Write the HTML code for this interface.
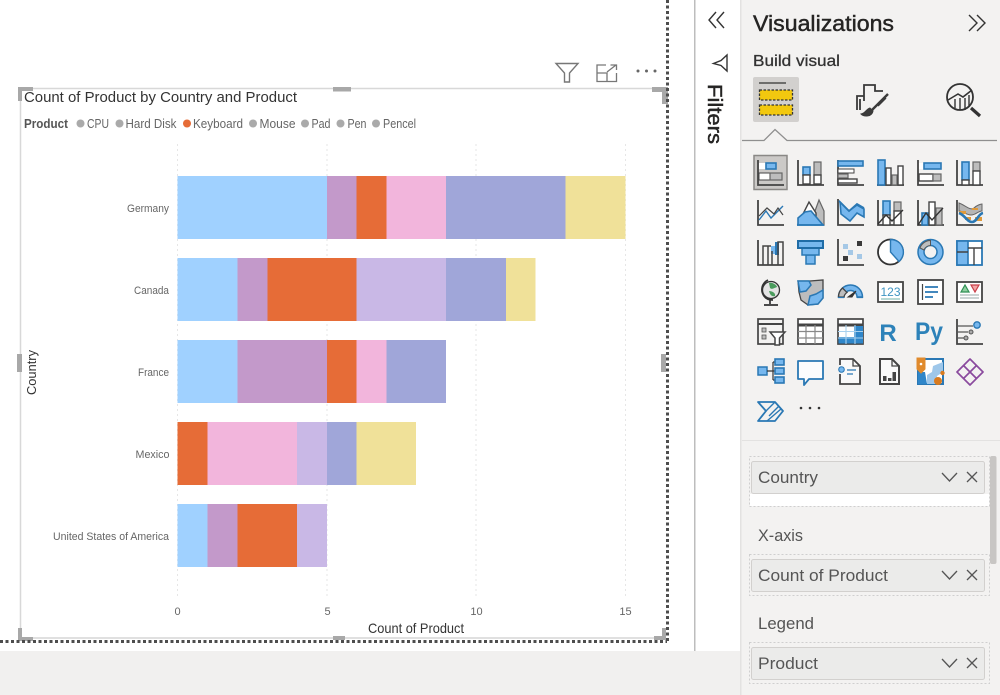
<!DOCTYPE html>
<html><head><meta charset="utf-8"><style>
html,body{margin:0;padding:0;width:1000px;height:695px;overflow:hidden;background:#fff}
svg{display:block;font-family:"Liberation Sans",sans-serif}
.d{fill:none;stroke:#444;stroke-width:1.8}
.b{fill:#76b7ee;stroke:#2a78b4;stroke-width:1.6}
.bl{fill:none;stroke:#2a78b4;stroke-width:1.8}
.g{fill:#bdbdbd;stroke:#666;stroke-width:1.2}
.w{fill:#fff;stroke:#444;stroke-width:1.4}
</style></head><body>
<svg width="1000" height="695" viewBox="0 0 1000 695" xmlns="http://www.w3.org/2000/svg">
<rect width="1000" height="695" fill="#fff"/>
<rect x="0" y="651" width="741" height="44" fill="#f1f0ef"/>
<rect x="694" y="0" width="1.500" height="651" fill="#bdbdbd"/>
<rect x="741" y="0" width="259" height="695" fill="#f3f2f1"/>
<rect x="740" y="0" width="1.500" height="695" fill="#e3e2e1"/>

<!-- gridlines -->
<g stroke="#e6e6e6" stroke-dasharray="2 3" stroke-width="1">
<path d="M177.500 144V597M327 144V597M476 144V597M625.500 144V597"/>
</g>
<!-- visual border -->
<path d="M20.500 630V88.500H665" fill="none" stroke="#d8d8d8" stroke-width="1.500"/>
<rect x="20" y="637" width="645" height="2" fill="#e0e0e0"/>
<!-- bars -->
<g>
<rect x="177.500" y="176" width="149.500" height="63" fill="#a0d1ff"/><rect x="327" y="176" width="29.500" height="63" fill="#c399ca"/><rect x="356.500" y="176" width="30" height="63" fill="#e66c37"/><rect x="386.500" y="176" width="59.500" height="63" fill="#f2b5dc"/><rect x="446" y="176" width="119.500" height="63" fill="#a0a6d9"/><rect x="565.500" y="176" width="60" height="63" fill="#f0e199"/>
<rect x="177.500" y="258" width="60" height="63" fill="#a0d1ff"/><rect x="237.500" y="258" width="30" height="63" fill="#c399ca"/><rect x="267.500" y="258" width="89" height="63" fill="#e66c37"/><rect x="356.500" y="258" width="89.500" height="63" fill="#c9b8e6"/><rect x="446" y="258" width="60" height="63" fill="#a0a6d9"/><rect x="506" y="258" width="29.500" height="63" fill="#f0e199"/>
<rect x="177.500" y="340" width="60" height="63" fill="#a0d1ff"/><rect x="237.500" y="340" width="89.500" height="63" fill="#c399ca"/><rect x="327" y="340" width="29.500" height="63" fill="#e66c37"/><rect x="356.500" y="340" width="30" height="63" fill="#f2b5dc"/><rect x="386.500" y="340" width="59.500" height="63" fill="#a0a6d9"/>
<rect x="177.500" y="422" width="30" height="63" fill="#e66c37"/><rect x="207.500" y="422" width="89.500" height="63" fill="#f2b5dc"/><rect x="297" y="422" width="30" height="63" fill="#c9b8e6"/><rect x="327" y="422" width="29.500" height="63" fill="#a0a6d9"/><rect x="356.500" y="422" width="59.500" height="63" fill="#f0e199"/>
<rect x="177.500" y="504" width="30" height="63" fill="#a0d1ff"/><rect x="207.500" y="504" width="30" height="63" fill="#c399ca"/><rect x="237.500" y="504" width="59.500" height="63" fill="#e66c37"/><rect x="297" y="504" width="30" height="63" fill="#c9b8e6"/>
</g>
<!-- chart text -->
<text x="24" y="102" font-size="15" fill="#333" textLength="273" lengthAdjust="spacingAndGlyphs">Count of Product by Country and Product</text>
<g font-size="13" fill="#666">
<text x="24" y="128" font-weight="bold" fill="#555" textLength="44" lengthAdjust="spacingAndGlyphs">Product</text>
<circle cx="80.500" cy="123.500" r="4" fill="#aaa"/><text x="87" y="128" textLength="22" lengthAdjust="spacingAndGlyphs">CPU</text>
<circle cx="119.500" cy="123.500" r="4" fill="#aaa"/><text x="125.500" y="128" textLength="51" lengthAdjust="spacingAndGlyphs">Hard Disk</text>
<circle cx="187" cy="123.500" r="4" fill="#e66c37"/><text x="193" y="128" textLength="50" lengthAdjust="spacingAndGlyphs">Keyboard</text>
<circle cx="253" cy="123.500" r="4" fill="#aaa"/><text x="259.500" y="128" textLength="36" lengthAdjust="spacingAndGlyphs">Mouse</text>
<circle cx="305" cy="123.500" r="4" fill="#aaa"/><text x="311.500" y="128" textLength="19" lengthAdjust="spacingAndGlyphs">Pad</text>
<circle cx="340.500" cy="123.500" r="4" fill="#aaa"/><text x="347.500" y="128" textLength="19" lengthAdjust="spacingAndGlyphs">Pen</text>
<circle cx="376" cy="123.500" r="4" fill="#aaa"/><text x="383" y="128" textLength="33" lengthAdjust="spacingAndGlyphs">Pencel</text>
</g>
<g font-size="11" fill="#666">
<text x="127" y="212" textLength="42" lengthAdjust="spacingAndGlyphs">Germany</text>
<text x="134" y="294" textLength="35" lengthAdjust="spacingAndGlyphs">Canada</text>
<text x="138" y="376" textLength="31" lengthAdjust="spacingAndGlyphs">France</text>
<text x="135.500" y="458" textLength="34" lengthAdjust="spacingAndGlyphs">Mexico</text>
<text x="53" y="540" textLength="116" lengthAdjust="spacingAndGlyphs">United States of America</text>
<text x="177.500" y="615" text-anchor="middle">0</text>
<text x="327.500" y="615" text-anchor="middle">5</text>
<text x="476.500" y="615" text-anchor="middle">10</text>
<text x="625.500" y="615" text-anchor="middle">15</text>
</g>
<text x="368" y="633" font-size="14" fill="#333" textLength="96" lengthAdjust="spacingAndGlyphs">Count of Product</text>
<text transform="translate(36 395) rotate(-90)" font-size="13" fill="#333" textLength="45" lengthAdjust="spacingAndGlyphs">Country</text>

<!-- handles -->
<g fill="#a8a8a8">
<path d="M18 87H33V91H22V101H18Z"/>
<path d="M333 87H351V91.500H333Z"/>
<path d="M652 87H668V104H662V92H652Z"/>
<path d="M17 354H22V372H17Z"/>
<path d="M661 354H666V372H661Z"/>
<path d="M18 628H22V637H33V641H18Z"/>
<path d="M333 636H345V640H333Z"/>
<path d="M654 636H662V628H666V640H654Z"/>
</g>
<!-- selection dots -->
<path d="M667.500 0V641M0 641.500H667" fill="none" stroke="#4d4d4d" stroke-width="3" stroke-dasharray="3 2.500"/>
<!-- header icons -->
<path d="M556 63.500H578L569.500 73V82H564.500V73Z" fill="none" stroke="#777" stroke-width="1.400"/>
<path d="M606 65H597V81.500H616.500V73M597 73H607V81.500M607 72L616 65M610.500 65H616.500V70" fill="none" stroke="#777" stroke-width="1.300"/>
<g fill="#666"><circle cx="638" cy="71" r="1.500"/><circle cx="646.500" cy="71" r="1.500"/><circle cx="655" cy="71" r="1.500"/></g>

<!-- filters pane -->
<path d="M716 12L709 20L716 28M724 12L717 20L724 28" fill="none" stroke="#333" stroke-width="1.400"/>
<path d="M727 55V71L721 65.500L713.500 63.500L721 60.500Z" fill="none" stroke="#333" stroke-width="1.400"/>
<text transform="translate(708 84) rotate(90)" font-size="20" fill="#252423" stroke="#252423" stroke-width=".45" textLength="60" lengthAdjust="spacingAndGlyphs">Filters</text>

<!-- viz header -->
<text x="753" y="31" font-size="22" fill="#252423" stroke="#252423" stroke-width=".45" textLength="141" lengthAdjust="spacingAndGlyphs">Visualizations</text>
<path d="M969 15L977 23L969 31M977 15L985 23L977 31" fill="none" stroke="#333" stroke-width="1.400"/>
<text x="753" y="66" font-size="16" fill="#333" stroke="#333" stroke-width=".3" textLength="87" lengthAdjust="spacingAndGlyphs">Build visual</text>
<rect x="753" y="77" width="46" height="45" rx="2" fill="#d2d0ce"/>
<path d="M759 83H786" stroke="#333" stroke-width="1.300"/>
<rect x="759.500" y="90" width="33" height="10" fill="#f2c80f" stroke="#333" stroke-width="1.300" stroke-dasharray="2.500 1.500"/>
<rect x="759.500" y="105" width="33" height="10" fill="#f2c80f" stroke="#333" stroke-width="1.300" stroke-dasharray="2.500 1.500"/>
<g fill="none" stroke="#3a3a3a" stroke-width="1.800">
<path d="M857 110V96H864M860 110V99M864 101V85H875V91H883"/>
<path d="M888 94L872 110" stroke-width="2.400"/>
<path d="M886 98L878 106" stroke-width="1.400"/>
<path d="M870 108C866 109 866 113 861 114C864 117 872 117 873 111Z" fill="#3a3a3a" stroke-width="1"/>
</g>
<g fill="none" stroke="#333" stroke-width="1.800">
<circle cx="960" cy="97" r="13"/>
<path d="M971 108L980 116" stroke-width="3.200"/>
<path d="M948 100L958 94L963 97L972 90" stroke-width="1.600"/>
<path d="M955 99V108M960 98V110M965 98V110M969 95V106" stroke-width="1.400"/>
</g>
<path d="M742 140.500H764L775 129.500L787 140.500H997" fill="none" stroke="#8f8f8f" stroke-width="1.300"/>

<!-- row 1 -->
<rect x="754" y="155.500" width="33" height="34" fill="#cbc9c7" stroke="#8a8886" stroke-width="1.500"/>
<g transform="translate(757 159)">
<path class="d" d="M1 1V26H27"/><rect x="2" y="4" width="7" height="6" fill="#fff"/><rect x="9" y="4" width="10" height="6" class="b"/><rect x="2" y="14" width="11" height="7" fill="#fff" stroke="#444"/><rect x="13" y="14" width="12" height="7" class="g"/>
</g>
<g transform="translate(797 159)">
<path class="d" d="M1 1V26H27"/><rect x="6" y="8" width="7" height="8" class="b"/><rect x="6" y="16" width="7" height="9" class="w"/><rect x="17" y="3" width="7" height="13" class="g"/><rect x="17" y="16" width="7" height="9" class="w"/>
</g>
<g transform="translate(837 159)">
<path class="d" d="M1 1V26H27"/><rect x="1" y="2" width="25" height="5" class="b"/><rect x="1" y="10" width="16" height="4" fill="#fff" stroke="#444"/><rect x="1" y="15" width="10" height="4" class="g"/><rect x="1" y="20" width="19" height="4" class="w"/>
</g>
<g transform="translate(877 159)">
<path class="d" d="M0 26H27"/><rect x="1" y="1" width="7" height="25" class="b"/><rect x="9" y="9" width="5" height="17" class="w"/><rect x="15" y="16" width="5" height="10" class="g"/><rect x="21" y="7" width="5" height="19" class="w"/>
</g>
<g transform="translate(917 159)">
<path class="d" d="M1 1V26H27"/><rect x="2" y="4" width="7" height="6" fill="#fff"/><rect x="7" y="4" width="17" height="6" class="b"/><rect x="2" y="15" width="14" height="7" class="w"/><rect x="16" y="15" width="8" height="7" class="g"/>
</g>
<g transform="translate(956 159)">
<path class="d" d="M1 1V26H27"/><rect x="6" y="3" width="7" height="18" class="b"/><rect x="6" y="21" width="7" height="5" class="w"/><rect x="17" y="3" width="7" height="9" class="g"/><rect x="17" y="12" width="7" height="14" class="w"/>
</g>

<!-- row 2 -->
<g transform="translate(757 199)">
<path class="d" d="M1 1V26H27"/><path d="M2 21L9 12L14 19L26 7" fill="none" stroke="#2a78b4" stroke-width="1.400"/><path d="M2 17L10 9L17 15L21 9L26 16" fill="none" stroke="#444" stroke-width="1.200"/>
</g>
<g transform="translate(797 199)">
<path class="g" d="M18 12L22 1L27 12V26H18Z"/><path d="M1 25L12 3L19 14V25Z" fill="#fff" stroke="#444" stroke-width="1.400"/><path class="b" d="M1 19L8 13L14 12L26 26H1Z" stroke-width="1"/><path d="M0 26H27" stroke="#2a78b4" stroke-width="1.800"/>
</g>
<g transform="translate(837 199)">
<path class="b" d="M3 3L12 12L20 6L27 10V18L20 14L13 22L4 15Z" stroke="none"/><path class="d" d="M1 0V26H27"/><path class="bl" d="M2 2L12 12L20 5L27 9"/>
</g>
<g transform="translate(877 199)">
<path class="d" d="M1 1V26H27"/><rect x="6" y="2" width="7" height="14" class="b"/><rect x="6" y="16" width="7" height="10" class="w"/><rect x="17" y="3" width="7" height="9" class="g"/><rect x="17" y="12" width="7" height="14" class="w"/><path d="M1 25L9 16L15 22L26 11" fill="none" stroke="#333" stroke-width="1.400"/>
</g>
<g transform="translate(917 199)">
<path class="d" d="M1 1V26H27"/><rect x="5" y="14" width="6" height="12" class="b"/><rect x="12" y="3" width="6" height="23" class="w"/><rect x="19" y="9" width="6" height="17" class="g"/><path d="M1 26L9 14L15 21L26 9" fill="none" stroke="#333" stroke-width="1.400"/>
</g>
<g transform="translate(956 199)">
<path class="d" d="M1 1V26H27"/><path d="M3 4C9 6 14 12 18 9C21 6 25 5 26 5V12C22 12 20 16 15 16C10 16 7 12 3 12Z" fill="#b5b5b5" stroke="#666"/><rect x="9" y="18" width="6" height="3" fill="#e09a3a"/><rect x="3" y="12" width="7" height="3" fill="#e09a3a"/><rect x="19" y="18" width="7" height="4" fill="#e09a3a"/><rect x="16" y="9" width="6" height="2" fill="#e09a3a"/><path d="M3 14C9 16 11 23 16 23C21 23 22 15 27 14" fill="none" stroke="#2a78b4" stroke-width="2.600"/>
</g>

<!-- row 3 -->
<g transform="translate(757 239)">
<rect x="14" y="7" width="6" height="8" fill="#76b7ee"/><rect x="18" y="3" width="4" height="13" fill="#2a78b4"/>
<path class="d" d="M1 1V26H27"/><path d="M6 26V7H11V26M11 7H14M15 26V12M21 26V3H26V26" fill="none" stroke="#444" stroke-width="1.500"/>
</g>
<g transform="translate(797 239)" fill="#76b7ee" stroke="#2a78b4">
<rect x="1" y="9" width="0" height="0"/><rect x="9" y="16" width="9" height="9" stroke-width="1.500"/><rect x="5" y="9" width="17" height="7" stroke-width="1.500"/><rect x="1" y="2" width="25" height="7" stroke="#1f6ca6" stroke-width="2"/>
</g>
<g transform="translate(837 239)">
<path class="d" d="M1 0V26H27"/>
<rect x="6" y="5" width="5" height="5" fill="#a5c8e6"/><rect x="20" y="2" width="5" height="5" fill="#3a3a3a"/><rect x="11" y="11" width="5" height="5" fill="#a5c8e6"/><rect x="6" y="17" width="5" height="5" fill="#3a3a3a"/><rect x="20" y="15" width="5" height="5" fill="#a5c8e6"/>
</g>
<g transform="translate(877 239)">
<circle cx="13.500" cy="13" r="12.500" fill="#fff" stroke="#333" stroke-width="1.800"/>
<path d="M13.500 .5A12.500 12.500 0 0 1 22 22.500L13.500 13Z" fill="#76b7ee" stroke="#2a78b4" stroke-width="1.400"/>
</g>
<g transform="translate(917 239)">
<circle cx="13.500" cy="13" r="9.500" fill="none" stroke="#76b7ee" stroke-width="6"/>
<circle cx="13.500" cy="13" r="12.500" fill="none" stroke="#2a78b4" stroke-width="1.500"/>
<circle cx="13.500" cy="13" r="6.500" fill="#f3f2f1" stroke="#2a78b4" stroke-width="1.500"/>
<path d="M3 9A11 11 0 0 1 13.500 1.500V6.500A7 7 0 0 0 7 11Z" fill="#bdbdbd" stroke="#555"/>
</g>
<g transform="translate(956 239)">
<rect x="1" y="2" width="25" height="24" fill="#fff" stroke="#2a78b4" stroke-width="1.800"/>
<rect x="1" y="2" width="11" height="24" fill="#76b7ee" stroke="#2a78b4" stroke-width="1.600"/>
<path d="M1 13H12M12 9H26M18 9V26" stroke="#444" stroke-width="1.400"/>
</g>

<!-- row 4 -->
<g transform="translate(757 279)">
<circle cx="14" cy="11" r="8.500" fill="#e4e4e4" stroke="#333" stroke-width="1.300"/>
<path d="M12 4C15 3 20 6 20 8C17 9 15 11 13 9ZM12 12C15 12 19 14 18 17C15 18 13 16 12 12Z" fill="#4a9c5d"/>
<path d="M11 1C5 4 3 11 7 17C9 20 13 21 16 21M13 21V25M7 26H21" fill="none" stroke="#333" stroke-width="1.700"/>
</g>
<g transform="translate(797 279)">
<path d="M1 2H13L26 1V19L21 25L11 26L4 21L2 13Z" fill="#bdbdbd" stroke="#444" stroke-width="1.300"/>
<path d="M1 2H12L14 6L9 12L3 13ZM26 11V19L21 25L11 26L13 17L19 15Z" fill="#76b7ee" stroke="#2a78b4" stroke-width="1.500"/>
</g>
<g transform="translate(837 279)">
<path d="M1.500 18A12 12 0 0 1 25.500 18H20A6.500 6.500 0 0 0 7 18Z" fill="#76b7ee" stroke="#2a78b4" stroke-width="1.500"/>
<path d="M1.500 18A12 12 0 0 1 5.500 9L10 13.500A6.500 6.500 0 0 0 7 18Z" fill="#bdbdbd" stroke="#444" stroke-width="1.300"/>
<path d="M11 18L19 12L15 18Z" fill="#333" stroke="#333"/>
<path d="M1 18.500H7M20 18.500H26" stroke="#2a78b4" stroke-width="1.200"/>
</g>
<g transform="translate(877 279)">
<rect x="1" y="3" width="25" height="20" fill="#fff" stroke="#444" stroke-width="1.800"/>
<text x="13.500" y="17" font-size="12" fill="#3e94c2" text-anchor="middle" textLength="20" lengthAdjust="spacingAndGlyphs">123</text>
<path d="M4 20H23" stroke="#6fb0a8" stroke-width="1"/>
</g>
<g transform="translate(917 279)">
<rect x="1" y="1" width="25" height="24" fill="#fff" stroke="#444" stroke-width="1.800"/>
<path d="M5.500 5V21" stroke="#444" stroke-width="1.200"/>
<path d="M8 8H21M8 13H21M8 18H16" stroke="#2a78b4" stroke-width="1.700"/>
</g>
<g transform="translate(956 279)">
<rect x="1" y="3" width="25" height="20" fill="#fff" stroke="#444" stroke-width="1.800"/>
<path d="M5 13L9 6L13 13Z" fill="#8fcf9f" stroke="#2f8f55" stroke-width="1.200"/>
<path d="M15 6H23L19 13Z" fill="#f2a5a5" stroke="#c9404a" stroke-width="1.200"/>
<path d="M4 16H23M4 19H23" stroke="#9aa" stroke-width="1"/>
</g>

<!-- row 5 -->
<g transform="translate(757 318)">
<rect x="1" y="1" width="25" height="25" fill="#f3f2f1" stroke="#444" stroke-width="1.700"/>
<path d="M1 6H26" stroke="#444" stroke-width="2"/>
<rect x="5" y="10" width="4" height="4" fill="#bdbdbd" stroke="#555" stroke-width=".8"/><rect x="5" y="17" width="4" height="4" fill="#bdbdbd" stroke="#555" stroke-width=".8"/>
<path d="M13 14H28L22.500 20V27H18V20Z" fill="#fff" stroke="#444" stroke-width="1.500"/>
</g>
<g transform="translate(797 318)">
<rect x="1" y="1" width="25" height="25" fill="#fff" stroke="#444" stroke-width="1.700"/>
<path d="M1 7H26" stroke="#444" stroke-width="3"/>
<path d="M1 13.500H26M1 20H26M9 7V26M18 7V26" stroke="#888" stroke-width="1.200"/>
</g>
<g transform="translate(837 318)">
<rect x="1" y="1" width="25" height="25" fill="#fff" stroke="#444" stroke-width="1.700"/>
<path d="M1 7H26" stroke="#444" stroke-width="3"/>
<rect x="1.500" y="19" width="24" height="6.500" fill="#2f86c9"/><rect x="17" y="8" width="9" height="17.500" fill="#2f86c9"/>
<path d="M1 13.500H26M1 20H26M9 7V26M18 7V26" stroke="#a9d1ee" stroke-width="1.100"/>
</g>
<text x="888" y="341" font-size="24" font-weight="bold" fill="#2d82b9" text-anchor="middle">R</text>
<text x="929" y="340" font-size="25" font-weight="bold" fill="#2d82b9" text-anchor="middle" textLength="28" lengthAdjust="spacingAndGlyphs">Py</text>
<g transform="translate(956 318)">
<path class="d" d="M1 1V26H27"/>
<path d="M1 8H17M1 14H12M1 20H8" stroke="#555" stroke-width="1.200"/>
<circle cx="21" cy="7" r="3.200" fill="#76b7ee" stroke="#2a78b4" stroke-width="1.400"/>
<circle cx="15" cy="14" r="2" fill="#aaa" stroke="#555"/>
<circle cx="10" cy="20" r="2" fill="#aaa" stroke="#555"/>
</g>

<!-- row 6 -->
<g transform="translate(757 358)">
<rect x="1" y="9" width="9" height="8" fill="#76b7ee" stroke="#2a78b4" stroke-width="1.500"/>
<path d="M10 13H16M16 4V22M16 4H18M16 13H18M16 22H18" fill="none" stroke="#333" stroke-width="1.200"/>
<rect x="18" y="1" width="9" height="6" class="b"/><rect x="18" y="10" width="9" height="6" class="b"/><rect x="18" y="19" width="9" height="6" class="b"/>
</g>
<path d="M798 361H823V379H809L804 385V379H798Z" fill="#fbfcfd" stroke="#2a78b4" stroke-width="1.800" stroke-linejoin="round"/>
<g transform="translate(837 358)">
<path d="M3 7V1H16L23 8V26H3V16" fill="#f9f9f9" stroke="#444" stroke-width="1.800"/>
<path d="M16 1V8H23" fill="none" stroke="#444" stroke-width="1.300"/>
<circle cx="4.500" cy="11.500" r="2.800" fill="#76b7ee" stroke="#2a78b4"/>
<path d="M10 12H19M10 16H16" stroke="#2a78b4" stroke-width="1.200"/>
</g>
<g transform="translate(877 358)">
<path d="M3 26V1H15L22 8V26Z" fill="#f9f9f9" stroke="#444" stroke-width="2"/>
<path d="M15 1V8H22" fill="none" stroke="#444" stroke-width="1.300"/>
<rect x="6" y="18" width="3.500" height="5" fill="#444"/><rect x="11" y="20" width="3.500" height="3" fill="#444"/><rect x="15.500" y="14" width="3.500" height="9" fill="#444"/>
</g>
<g transform="translate(917 358)">
<rect x="1" y="1" width="25" height="25" fill="#fff" stroke="#2a78b4" stroke-width="2"/>
<path d="M10 26V17L15 14L16 8L26 4V14L20 18L19 26Z" fill="#9ec7ea"/>
<path d="M1 26V14H8L10 26Z" fill="#2f86c9"/>
<path d="M0 0H8V11L4 15L0 11Z" fill="#e08a2c" stroke="#e08a2c"/>
<circle cx="4" cy="6" r="1.300" fill="#fff"/>
<circle cx="21" cy="23" r="4" fill="#d97b1f"/>
<circle cx="25.500" cy="15" r="2.200" fill="#d97b1f"/>
</g>
<g transform="translate(956 358)" fill="none" stroke="#8a4a9e" stroke-width="1.700" stroke-linejoin="round">
<path d="M14 1L27 14L14 27L1 14Z"/><path d="M7.500 7.500L14 14L20.500 7.500M14 14L7.500 20.500M14 14L20.500 20.500"/>
</g>

<!-- row 7 -->
<g fill="none" stroke="#2a78b4" stroke-width="1.800" stroke-linejoin="round">
<path d="M758 402H775L783 411L775 421H758L766 411Z"/>
<path d="M766 411L775 402M769 416L779 406M767 421L781 409" stroke-width="1.400"/>
</g>
<g fill="#333"><circle cx="801" cy="408" r="1.300"/><circle cx="810" cy="408" r="1.300"/><circle cx="819" cy="408" r="1.300"/></g>

<!-- divider -->
<rect x="742" y="440" width="258" height="1" fill="#e3e2e1"/>

<!-- wells -->
<rect x="749.500" y="456.500" width="240" height="50" fill="#f3f2f1" stroke="#cfcfcf" stroke-dasharray="2 2"/>
<rect x="750" y="494" width="239" height="12" fill="#fff"/>
<rect x="749.500" y="554.500" width="240" height="41" fill="#f3f2f1" stroke="#cfcfcf" stroke-dasharray="2 2"/>
<rect x="749.500" y="642.500" width="240" height="41" fill="#f3f2f1" stroke="#cfcfcf" stroke-dasharray="2 2"/>
<rect x="990" y="456" width="6.500" height="108" rx="2" fill="#c8c6c4"/>
<g fill="#ebebea" stroke="#d2d0ce">
<rect x="751.500" y="461.500" width="233" height="32" rx="2"/>
<rect x="751.500" y="559.500" width="233" height="32" rx="2"/>
<rect x="751.500" y="647.500" width="233" height="32" rx="2"/>
</g>
<g font-size="17" fill="#555">
<text x="758" y="483" textLength="60" lengthAdjust="spacingAndGlyphs">Country</text>
<text x="758" y="581" textLength="130" lengthAdjust="spacingAndGlyphs">Count of Product</text>
<text x="758" y="669" textLength="60" lengthAdjust="spacingAndGlyphs">Product</text>
<text x="758" y="541" textLength="45" lengthAdjust="spacingAndGlyphs">X-axis</text>
<text x="758" y="629" textLength="56" lengthAdjust="spacingAndGlyphs">Legend</text>
</g>
<g fill="none" stroke="#555" stroke-width="1.300">
<path d="M942 473L949.500 481L957 473M967 472L977 482M977 472L967 482"/>
<path d="M942 571L949.500 579L957 571M967 570L977 580M977 570L967 580"/>
<path d="M942 659L949.500 667L957 659M967 658L977 668M977 658L967 668"/>
</g>
</svg>
</body></html>
